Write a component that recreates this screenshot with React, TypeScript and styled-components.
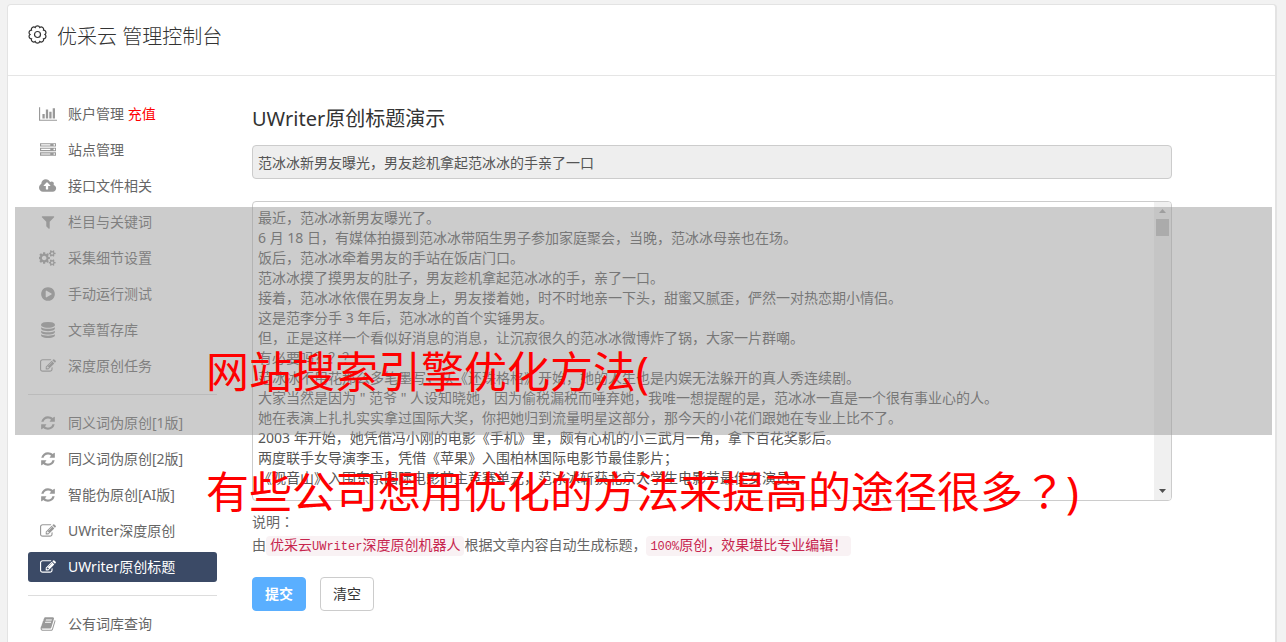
import React from "react";
import styled, { createGlobalStyle, css } from "styled-components";

const GlobalStyle = createGlobalStyle`
  *, *::before, *::after { box-sizing: border-box; }
  body {
    margin: 0;
    background: #f2f2f2;
    color: #666;
    font-family: "Noto Sans", "Noto Sans CJK SC", sans-serif;
    font-size: 14px;
    line-height: 20px;
  }
`;

const Page = styled.div`
  position: relative;
  min-height: 100vh;
  padding: 4px 9px 0 7px;
  overflow: hidden;
`;

const Panel = styled.div`
  min-height: calc(100vh - 4px);
  background: #fff;
  border: 1px solid #e3e3e3;
  border-right-width: 2px;
  border-bottom: 0;
  border-radius: 4px 4px 0 0;
`;

const Header = styled.header`
  display: flex;
  align-items: flex-start;
  gap: 10px;
  height: 71px;
  padding: 18px 20px 0;
  border-bottom: 1px solid #e5e5e5;
  color: #333;
`;

const HeaderTitle = styled.h1`
  margin: 0;
  font-size: 20px;
  font-weight: 300;
  line-height: 28px;
`;

const Columns = styled.div`
  display: flex;
  gap: 35px;
  padding: 23px 20px 0;
`;

const Sidebar = styled.nav`
  flex: 0 0 189px;
`;

const MenuList = styled.ul`
  display: flex;
  flex-direction: column;
  gap: 6px;
  margin: 0;
  padding: 0;
  list-style: none;

  & + & {
    margin-top: 13px;
    padding-top: 13px;
    border-top: 1px solid #ddd;
  }
`;

const MenuLink = styled.a<{ $active?: boolean }>`
  display: flex;
  align-items: center;
  gap: 10px;
  height: 30px;
  padding: 0 10px;
  border-radius: 3px;
  color: #666;
  text-decoration: none;
  ${(p) =>
    p.$active &&
    css`
      background: #3b4a66;
      color: #fff;
    `}
`;

const MenuIcon = styled.span<{ $active?: boolean }>`
  display: flex;
  justify-content: center;
  width: 20px;
  color: ${(p) => (p.$active ? "#fff" : "#999")};

  svg {
    height: 16px;
    fill: currentColor;
  }
`;

const Recharge = styled.span`
  color: #f00;
`;

const Main = styled.main`
  flex: 1;
  min-width: 0;
  padding: 9px 83px 0 0;
`;

const SectionTitle = styled.h2`
  margin: 0 0 15px;
  color: #333;
  font-size: 20px;
  font-weight: 400;
  line-height: 22px;
`;

const fieldStyle = css`
  display: block;
  width: 100%;
  border: 1px solid #ccc;
  border-radius: 4px;
  color: #555;
  font: inherit;
  outline: none;
`;

const TitleInput = styled.input`
  ${fieldStyle}
  height: 34px;
  margin-bottom: 22px;
  padding: 6px 5px;
  background: #eee;
`;

const ArticleBox = styled.div`
  position: relative;
  height: 300px;
`;

const ArticleText = styled.textarea`
  ${fieldStyle}
  height: 100%;
  padding: 6px 24px 6px 5px;
  background: #fff;
  resize: none;
  overflow: hidden;
  white-space: pre-wrap;
`;

const ScrollTrack = styled.div`
  position: absolute;
  top: 1px;
  right: 1px;
  bottom: 1px;
  display: flex;
  flex-direction: column;
  align-items: center;
  width: 17px;
  padding: 7px 0;
  border-radius: 0 3px 3px 0;
  background: #f0f0f0;
`;

const ScrollThumb = styled.div`
  width: 13px;
  height: 17px;
  margin: 6px 0 auto;
  background: #bdbdbd;
`;

const Arrow = styled.svg<{ $muted?: boolean }>`
  width: 7px;
  height: 4px;
  fill: ${(p) => (p.$muted ? "#a3a3a3" : "#505050")};
`;

const Notes = styled.div`
  display: flex;
  flex-direction: column;
  gap: 3px;
  margin: 11px 0 22px;

  p {
    margin: 0;
  }
`;

const CenteredMark = styled.span`
  font-family: "Noto Sans CJK TC", sans-serif;
  line-height: 1;
`;

const Code = styled.code`
  padding: 2px 4px;
  border-radius: 4px;
  background: #f9f2f4;
  color: #c7254e;
  font-family: "Liberation Mono", "Noto Sans CJK SC", monospace;
  font-size: 14px;
  line-height: 1;
`;

const CodeLatin = styled.span`
  font-size: 12px;
`;

const Actions = styled.div`
  display: flex;
  gap: 14px;
`;

const Button = styled.button<{ $primary?: boolean }>`
  height: 34px;
  padding: 0 12px;
  border: 1px solid ${(p) => (p.$primary ? "#5aafff" : "#ccc")};
  border-radius: 4px;
  background: ${(p) => (p.$primary ? "#5aafff" : "#fff")};
  color: ${(p) => (p.$primary ? "#fff" : "#333")};
  font: inherit;
  font-weight: ${(p) => (p.$primary ? 700 : 400)};
`;

const Band = styled.div`
  position: absolute;
  top: 207px;
  left: 15px;
  right: 14px;
  height: 228px;
  background: rgba(153, 153, 153, 0.5);
  pointer-events: none;
`;

const Caption = styled.div`
  position: absolute;
  top: 312px;
  left: 206px;
  color: #f00;
  font-size: 43px;
  line-height: 120px;
  white-space: nowrap;
  pointer-events: none;

  p {
    margin: 0;
  }
`;

const icons = {
  chart: {
    w: 2048,
    d: "M640 896v512h-256v-512h256zm384-512v1024h-256v-1024h256zm1024 1152v128h-2048v-1536h128v1408h1920zm-640-896v768h-256v-768h256zm384-384v1152h-256v-1152h256z",
  },
  server: {
    w: 1792,
    d: "M128 1408h1024v-128h-1024v128zm0-512h1024v-128h-1024v128zm1568 448q0-40-28-68t-68-28-68 28-28 68 28 68 68 28 68-28 28-68zm-1568-960h1024v-128h-1024v128zm1568 448q0-40-28-68t-68-28-68 28-28 68 28 68 68 28 68-28 28-68zm0-512q0-40-28-68t-68-28-68 28-28 68 28 68 68 28 68-28 28-68zm96 832v384h-1792v-384h1792zm0-512v384h-1792v-384h1792zm0-512v384h-1792v-384h1792z",
  },
  cloud: {
    w: 1920,
    x: -64,
    d: "M1216 864q0-14-9-23l-352-352q-9-9-23-9t-23 9l-351 351q-10 12-10 24 0 14 9 23t23 9h224v352q0 13 9.5 22.5t22.5 9.5h192q13 0 22.5-9.5t9.5-22.5v-352h224q13 0 22.5-9.5t9.5-22.5zm640 288q0 159-112.5 271.5t-271.5 112.5h-1088q-185 0-316.5-131.5t-131.5-316.5q0-130 70-240t188-165q-2-30-2-43 0-212 150-362t362-150q156 0 285.5 87t188.5 231q71-62 166-62 106 0 181 75t75 181q0 76-41 138 130 31 213.5 135.5t83.5 238.5z",
  },
  filter: {
    w: 1792,
    d: "M1595 295q17 41-14 70l-493 493v742q0 42-39 59-13 5-25 5-27 0-45-19l-256-256q-19-19-19-45v-486l-493-493q-31-29-14-70 17-39 59-39h1280q42 0 59 39z",
  },
  cogs: {
    w: 1920,
    d: "M832 896q0-106-75-181t-181-75-181 75-75 181 75 181 181 75 181-75 75-181zm768 512q0-52-38-90t-90-38-90 38-38 90q0 53 37.5 90.5t90.5 37.5 90.5-37.5 37.5-90.5zm0-1024q0-52-38-90t-90-38-90 38-38 90q0 53 37.5 90.5t90.5 37.5 90.5-37.5 37.5-90.5zm-384 421v185q0 10-7 19.5t-16 10.5l-155 24q-11 35-32 76 34 48 90 115 7 11 7 20 0 12-7 19-23 30-82.5 89.5t-78.5 59.5q-11 0-21-7l-115-90q-37 19-77 31-11 108-23 155-7 24-30 24h-186q-11 0-20-7.5t-10-17.5l-23-153q-34-10-75-31l-118 89q-7 7-20 7-11 0-21-8-144-133-144-160 0-9 7-19 10-14 41-53t47-61q-23-44-35-82l-152-24q-10-1-17-9.5t-7-19.5v-185q0-10 7-19.5t16-10.5l155-24q11-35 32-76-34-48-90-115-7-11-7-20 0-12 7-20 22-30 82-89t79-59q11 0 21 7l115 90q34-18 77-32 11-108 23-154 7-24 30-24h186q11 0 20 7.5t10 17.5l23 153q34 10 75 31l118-89q8-7 20-7 11 0 21 8 144 133 144 160 0 8-7 19-12 16-42 54t-45 60q23 48 34 82l152 23q10 2 17 10.5t7 19.5zm640 533v140q0 16-149 31-12 27-30 52 51 113 51 138 0 4-4 7-122 71-124 71-8 0-46-47t-52-68q-20 2-30 2t-30-2q-14 21-52 68t-46 47q-2 0-124-71-4-3-4-7 0-25 51-138-18-25-30-52-149-15-149-31v-140q0-16 149-31 13-29 30-52-51-113-51-138 0-4 4-7 4-2 35-20t59-34 30-16q8 0 46 46.5t52 67.5q20-2 30-2t30 2q51-71 92-112l6-2q4 0 124 70 4 3 4 7 0 25-51 138 17 23 30 52 149 15 149 31zm0-1024v140q0 16-149 31-12 27-30 52 51 113 51 138 0 4-4 7-122 71-124 71-8 0-46-47t-52-68q-20 2-30 2t-30-2q-14 21-52 68t-46 47q-2 0-124-71-4-3-4-7 0-25 51-138-18-25-30-52-149-15-149-31v-140q0-16 149-31 13-29 30-52-51-113-51-138 0-4 4-7 4-2 35-20t59-34 30-16q8 0 46 46.5t52 67.5q20-2 30-2t30 2q51-71 92-112l6-2q4 0 124 70 4 3 4 7 0 25-51 138 17 23 30 52 149 15 149 31z",
  },
  play: {
    w: 1792,
    d: "M896 128q209 0 385.5 103t279.5 279.5 103 385.5-103 385.5-279.5 279.5-385.5 103-385.5-103-279.5-279.5-103-385.5 103-385.5 279.5-279.5 385.5-103zm384 823q32-18 32-55t-32-55l-544-320q-31-19-64-1-32 19-32 56v640q0 37 32 56 16 8 32 8 17 0 32-9z",
  },
  database: {
    w: 1792,
    d: "M896 768q237 0 443-43t325-127v170q0 69-103 128t-280 93.5-385 34.5-385-34.5-280-93.5-103-128v-170q119 84 325 127t443 43zm0 768q237 0 443-43t325-127v170q0 69-103 128t-280 93.5-385 34.5-385-34.5-280-93.5-103-128v-170q119 84 325 127t443 43zm0-384q237 0 443-43t325-127v170q0 69-103 128t-280 93.5-385 34.5-385-34.5-280-93.5-103-128v-170q119 84 325 127t443 43zm0-1152q208 0 385 34.5t280 93.5 103 128v128q0 69-103 128t-280 93.5-385 34.5-385-34.5-280-93.5-103-128v-128q0-69 103-128t280-93.5 385-34.5z",
  },
  edit: {
    w: 1792,
    d: "M888 1184l116-116-152-152-116 116v56h96v96h56zm440-720q-16-16-33 1l-350 350q-17 17-1 33t33-1l350-350q17-17 1-33zm80 594v190q0 119-84.5 203.5t-203.5 84.5h-832q-119 0-203.5-84.5t-84.5-203.5v-832q0-119 84.5-203.5t203.5-84.5h832q63 0 117 25 15 7 18 23 3 17-9 29l-49 49q-14 14-32 8-23-6-45-6h-832q-66 0-113 47t-47 113v832q0 66 47 113t113 47h832q66 0 113-47t47-113v-126q0-13 9-22l64-64q15-15 35-7t20 29zm-96-738l288 288-672 672h-288v-288zm444 132l-92 92-288-288 92-92q28-28 68-28t68 28l152 152q28 28 28 68t-28 68z",
  },
  refresh: {
    w: 1792,
    d: "M1639 1056q0 5-1 7-64 268-268 434.5t-478 166.5q-146 0-282.5-55t-243.5-157l-129 129q-19 19-45 19t-45-19-19-45v-448q0-26 19-45t45-19h448q26 0 45 19t19 45-19 45l-137 137q71 66 161 102t187 36q134 0 250-65t186-179q11-17 53-117 8-23 30-23h192q13 0 22.5 9.5t9.5 22.5zm25-800v448q0 26-19 45t-45 19h-448q-26 0-45-19t-19-45 19-45l138-138q-148-137-349-137-134 0-250 65t-186 179q-11 17-53 117-8 23-30 23h-199q-13 0-22.5-9.5t-9.5-22.5v-7q65-268 270-434.5t480-166.5q146 0 284 55.5t245 156.5l130-129q19-19 45-19t45 19 19 45z",
  },
  book: {
    w: 1792,
    d: "M1703 478q40 57 18 129l-275 906q-19 64-76.5 107.5t-122.5 43.5h-923q-77 0-148.5-53.5t-99.5-131.5q-24-67-2-127 0-4 3-27t4-37q1-8-3-21.5t-3-19.5q2-11 8-21t16.5-23.5 16.5-23.5q23-38 45-91.5t30-91.5q3-10 .5-30t-.5-28q3-11 17-28t17-23q21-36 42-92t25-90q1-9-2.5-32t.5-28q4-13 22-30.5t22-22.5q19-26 42.5-84.5t27.5-96.5q1-8-3-25.5t-2-26.5q2-8 9-18t18-23 17-21q8-12 16.5-30.5t15-35 16-36 19.5-32 26.5-23.5 36-11.5 47.5 5.5l-1 3q38-9 51-9h761q74 0 114 56t18 130l-274 906q-36 119-71.5 153.5t-128.5 34.5h-869q-27 0-38 15-11 16-1 43 24 70 144 70h923q29 0 56-15.5t35-41.5l300-987q7-22 5-57 38 15 59 43zm-1064 2q-4 13 2 22.5t20 9.5h608q13 0 25.5-9.5t16.5-22.5l21-64q4-13-2-22.5t-20-9.5h-608q-13 0-25.5 9.5t-16.5 22.5zm-83 256q-4 13 2 22.5t20 9.5h608q13 0 25.5-9.5t16.5-22.5l21-64q4-13-2-22.5t-20-9.5h-608q-13 0-25.5 9.5t-16.5 22.5z",
  },
};

type IconName = keyof typeof icons;

interface MenuEntry {
  icon: IconName;
  label: string;
  extra?: string;
  active?: boolean;
}

const menu: MenuEntry[][] = [
  [
    { icon: "chart", label: "账户管理", extra: "充值" },
    { icon: "server", label: "站点管理" },
    { icon: "cloud", label: "接口文件相关" },
    { icon: "filter", label: "栏目与关键词" },
    { icon: "cogs", label: "采集细节设置" },
    { icon: "play", label: "手动运行测试" },
    { icon: "database", label: "文章暂存库" },
    { icon: "edit", label: "深度原创任务" },
  ],
  [
    { icon: "refresh", label: "同义词伪原创[1版]" },
    { icon: "refresh", label: "同义词伪原创[2版]" },
    { icon: "refresh", label: "智能伪原创[AI版]" },
    { icon: "edit", label: "UWriter深度原创" },
    { icon: "edit", label: "UWriter原创标题", active: true },
  ],
  [{ icon: "book", label: "公有词库查询" }],
];

const article = `最近，范冰冰新男友曝光了。
6 月 18 日，有媒体拍摄到范冰冰带陌生男子参加家庭聚会，当晚，范冰冰母亲也在场。
饭后，范冰冰牵着男友的手站在饭店门口。
范冰冰摸了摸男友的肚子，男友趁机拿起范冰冰的手，亲了一口。
接着，范冰冰依偎在男友身上，男友搂着她，时不时地亲一下头，甜蜜又腻歪，俨然一对热恋期小情侣。
这是范李分手 3 年后，范冰冰的首个实锤男友。
但，正是这样一个看似好消息的消息，让沉寂很久的范冰冰微博炸了锅，大家一片群嘲。
有必要吗？？？
范冰冰不用花那么多笔墨写，从《还珠格格》开始，她的人生也是内娱无法躲开的真人秀连续剧。
大家当然是因为 " 范爷 " 人设知晓她，因为偷税漏税而唾弃她，我唯一想提醒的是，范冰冰一直是一个很有事业心的人。
她在表演上扎扎实实拿过国际大奖，你把她归到流量明星这部分，那今天的小花们跟她在专业上比不了。
2003 年开始，她凭借冯小刚的电影《手机》里，颇有心机的小三武月一角，拿下百花奖影后。
两度联手女导演李玉，凭借《苹果》入围柏林国际电影节最佳影片；
《观音山》入围东京国际电影节主竞赛单元，范冰冰斩获北京大学生电影节最佳女演员。`;

function Icon({ name }: { name: IconName }) {
  const icon: { w: number; d: string; x?: number } = icons[name];
  return (
    <svg viewBox={`${icon.x ?? 0} 0 ${icon.w} 1792`} aria-hidden="true">
      <path d={icon.d} />
    </svg>
  );
}

// Ten shallow lobes around a circle, joined by arcs.
const gearPath = (() => {
  const lobes = 10;
  const points = Array.from({ length: lobes }, (_, i) => {
    const a = ((i + 0.5) / lobes) * Math.PI * 2 - Math.PI / 2;
    return [9.5 + Math.cos(a) * 7.4, 9.5 + Math.sin(a) * 7.4].map((n) => n.toFixed(2)).join(" ");
  });
  return `M${points[0]}${points
    .slice(1)
    .concat(points[0])
    .map((p) => `A2.4 2.4 0 0 1 ${p}`)
    .join("")}Z`;
})();

function GearIcon() {
  return (
    <svg width="19" height="23" viewBox="0 0 19 19" fill="none" stroke="#333" strokeWidth="1.2" aria-hidden="true">
      <path d={gearPath} />
      <circle cx="9.5" cy="9.5" r="3" />
    </svg>
  );
}

export default function App() {
  return (
    <Page>
      <GlobalStyle />
      <Panel>
        <Header>
          <GearIcon />
          <HeaderTitle>优采云 管理控制台</HeaderTitle>
        </Header>
        <Columns>
          <Sidebar aria-label="管理菜单">
            {menu.map((group, i) => (
              <MenuList key={i}>
                {group.map((item) => (
                  <li key={item.label}>
                    <MenuLink href="#" $active={item.active}>
                      <MenuIcon $active={item.active}>
                        <Icon name={item.icon} />
                      </MenuIcon>
                      <span>
                        {item.label}
                        {item.extra && <Recharge> {item.extra}</Recharge>}
                      </span>
                    </MenuLink>
                  </li>
                ))}
              </MenuList>
            ))}
          </Sidebar>
          <Main>
            <SectionTitle>UWriter原创标题演示</SectionTitle>
            <TitleInput
              aria-label="标题"
              readOnly
              defaultValue="范冰冰新男友曝光，男友趁机拿起范冰冰的手亲了一口"
            />
            <ArticleBox>
              <ArticleText aria-label="文章内容" spellCheck={false} defaultValue={article} />
              <ScrollTrack aria-hidden="true">
                <Arrow viewBox="0 0 7 4" $muted>
                  <path d="M0 4L3.5 0L7 4Z" />
                </Arrow>
                <ScrollThumb />
                <Arrow viewBox="0 0 7 4">
                  <path d="M0 0L3.5 4L7 0Z" />
                </Arrow>
              </ScrollTrack>
            </ArticleBox>
            <Notes>
              <p>
                说明<CenteredMark>：</CenteredMark>
              </p>
              <p>
                由
                <Code>
                  优采云<CodeLatin>UWriter</CodeLatin>深度原创机器人
                </Code>
                根据文章内容自动生成标题，
                <Code>
                  <CodeLatin>100%</CodeLatin>原创，效果堪比专业编辑！
                </Code>
              </p>
            </Notes>
            <Actions>
              <Button type="submit" $primary>
                提交
              </Button>
              <Button type="reset">清空</Button>
            </Actions>
          </Main>
        </Columns>
      </Panel>
      <Band />
      <Caption>
        <p>网站搜索引擎优化方法(</p>
        <p>
          有些公司想用优化的方法来提高的途径很多<CenteredMark>？</CenteredMark>)
        </p>
      </Caption>
    </Page>
  );
}
